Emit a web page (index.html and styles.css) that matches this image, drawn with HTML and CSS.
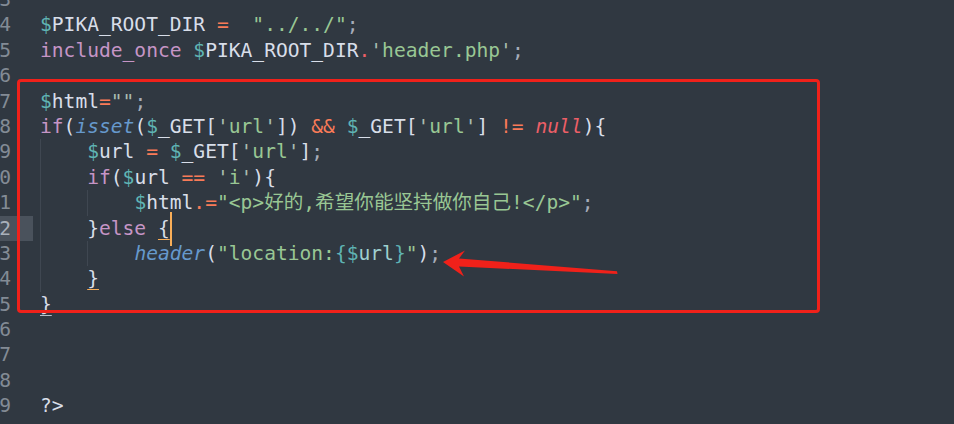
FILE: index.html
```html
<!DOCTYPE html>
<html>
<head>
<meta charset="utf-8">
<link rel="stylesheet" href="styles.css">
</head>
<body>
<div class="editor">
  <div class="gutter">
    <div class="ln">3</div>
    <div class="ln">4</div>
    <div class="ln">5</div>
    <div class="ln">6</div>
    <div class="ln">7</div>
    <div class="ln">8</div>
    <div class="ln">9</div>
    <div class="ln">10</div>
    <div class="ln">11</div>
    <div class="ln cur">12</div>
    <div class="ln">13</div>
    <div class="ln">14</div>
    <div class="ln">15</div>
    <div class="ln">16</div>
    <div class="ln">17</div>
    <div class="ln">18</div>
    <div class="ln">19</div>
  </div>
  <div class="code">
    <div class="line"></div>
    <div class="line"><span class="d">$</span><span class="w">PIKA_ROOT_DIR</span> <span class="o">=</span>  <span class="s">"../../"</span><span class="p">;</span></div>
    <div class="line"><span class="k">include_once</span> <span class="d">$</span><span class="w">PIKA_ROOT_DIR</span><span class="r">.</span><span class="q">'</span><span class="s">header.php</span><span class="q">'</span><span class="p">;</span></div>
    <div class="line"></div>
    <div class="line"><span class="d">$</span><span class="w">html</span><span class="o">=</span><span class="q">""</span><span class="p">;</span></div>
    <div class="line"><span class="k">if</span><span class="w">(</span><span class="f">isset</span><span class="w">(</span><span class="d">$</span><span class="w">_GET[</span><span class="q">'</span><span class="s">url</span><span class="q">'</span><span class="w">])</span> <span class="o">&amp;&amp;</span> <span class="d">$</span><span class="w">_GET[</span><span class="q">'</span><span class="s">url</span><span class="q">'</span><span class="w">]</span> <span class="o">!=</span> <span class="n">null</span><span class="w">){</span></div>
    <div class="line"><span class="ig"></span><span class="d">$</span><span class="w">url</span> <span class="o">=</span> <span class="d">$</span><span class="w">_GET[</span><span class="q">'</span><span class="s">url</span><span class="q">'</span><span class="w">]</span><span class="p">;</span></div>
    <div class="line"><span class="ig"></span><span class="k">if</span><span class="w">(</span><span class="d">$</span><span class="w">url</span> <span class="o">==</span> <span class="q">'</span><span class="s">i</span><span class="q">'</span><span class="w">){</span></div>
    <div class="line"><span class="ig"></span><span class="ig"></span><span class="d">$</span><span class="w">html</span><span class="o">.=</span><span class="s">"&lt;p&gt;好的,希望你能坚持做你自己!&lt;/p&gt;"</span><span class="p">;</span></div>
    <div class="line"><span class="ig"></span><span class="w">}</span><span class="k">else</span> <span class="w mb">{</span><span class="caret"></span></div>
    <div class="line"><span class="ig"></span><span class="ig"></span><span class="f">header</span><span class="w">(</span><span class="s">"location:</span><span class="d">{$</span><span class="v">url</span><span class="d">}</span><span class="s">"</span><span class="w">)</span><span class="p">;</span></div>
    <div class="line"><span class="ig"></span><span class="w mb">}</span></div>
    <div class="line"><span class="w mw">}</span></div>
    <div class="line"></div>
    <div class="line"></div>
    <div class="line"></div>
    <div class="line"><span class="w">?&gt;</span></div>
  </div>
</div>
<div class="box"></div>
<svg class="arrow" width="954" height="424" viewBox="0 0 954 424">
  <path d="M443 262 L465 250.5 L459 258.5 L617 271.2 L617.5 274 L459 266.5 L464 276.5 Z" fill="#f0211a"/>
</svg>
</body>
</html>
```

FILE: styles.css
```css
html, body {
  margin: 0;
  padding: 0;
  background: #303841;
  overflow: hidden;
  width: 954px;
  height: 424px;
}
body {
  position: relative;
  font-family: "DejaVu Sans Mono", "Noto Sans CJK SC", monospace;
  font-size: 19.6px;
  color: #d8dee9;
}
.editor {
  display: flex;
  margin-top: -13px;
}
.gutter {
  width: 33px;
  flex: none;
  overflow: visible;
}
.ln {
  height: 25.4px;
  line-height: 25.4px;
  text-align: right;
  margin-left: -14px;
  width: 25px;
  padding-right: 22px;
  color: #838b95;
  white-space: nowrap;
}
.ln.cur {
  background: #4a525c;
  color: #a9b0ba;
}
.code {
  margin-left: 7px;
  flex: 1;
}
.line {
  height: 25.4px;
  line-height: 25.4px;
  white-space: pre;
}
.ig {
  display: inline-block;
  width: 47.2px;
  height: 25.4px;
  vertical-align: top;
  box-shadow: inset 1px 0 0 #3f4751;
}
.d { color: #5fb4b4; }
.w { color: #d8dee9; }
.v { color: #9fd0d0; }
.o { color: #f97b58; }
.r { color: #ec5f67; }
.s { color: #99c794; }
.q { color: #a9bcb0; }
.p { color: #a6acb9; }
.k { color: #c695c6; }
.f { color: #6699cc; font-style: italic; }
.n { color: #ec5f67; font-style: italic; }
.mb {
  text-decoration: underline;
  text-decoration-color: #f9ae58;
  text-underline-offset: 4px;
}
.mw {
  text-decoration: underline;
  text-decoration-color: #b8bec8;
  text-underline-offset: 4px;
}
.caret {
  display: inline-block;
  width: 2px;
  height: 34px;
  background: #f9ae58;
  vertical-align: middle;
  margin: -5px -2px -5px 0;
}
.box {
  position: absolute;
  left: 17px;
  top: 79px;
  width: 803px;
  height: 234px;
  box-sizing: border-box;
  border: 3.5px solid #f0211a;
  border-radius: 4px;
}
.arrow {
  position: absolute;
  left: 0;
  top: 0;
}
```
